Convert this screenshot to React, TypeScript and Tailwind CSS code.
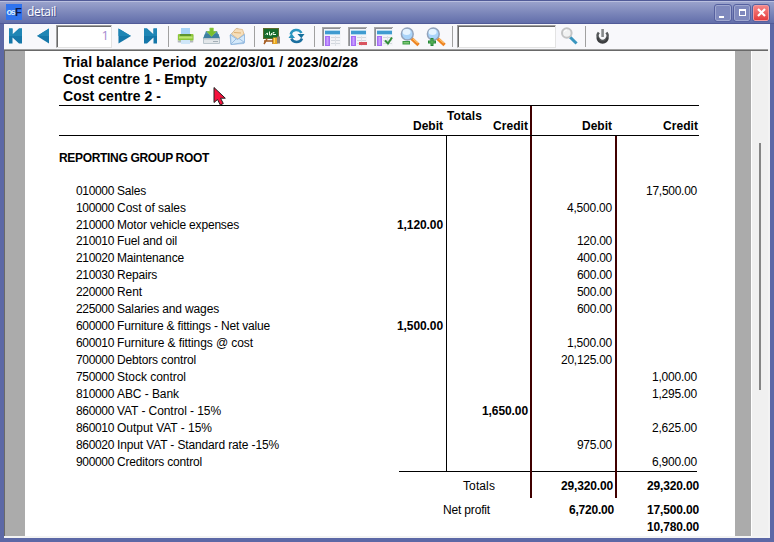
import { useLayoutEffect, useRef, type ReactNode } from "react";

/* Text whose tracking is adjusted so that it occupies a given advance width. */
function Fit({ w, className = "", children }: { w: number; className?: string; children: string }) {
  const ref = useRef<HTMLSpanElement>(null);
  useLayoutEffect(() => {
    const el = ref.current;
    if (!el) return;
    el.style.letterSpacing = "0px";
    const natural = el.getBoundingClientRect().width;
    el.style.letterSpacing = `${(w - natural) / children.length}px`;
  }, [w, children]);
  return (
    <span ref={ref} className={`inline-block whitespace-pre ${className}`}>
      {children}
    </span>
  );
}

function Icon({ children }: { children: ReactNode }) {
  return (
    <svg className="h-[25px] w-[26px] shrink-0" viewBox="0 0 26 25">
      {children}
    </svg>
  );
}

function Sep({ wide = false }: { wide?: boolean }) {
  return (
    <div className={`flex h-full shrink-0 pt-0.5 pb-0.5 ${wide ? "w-[9px] pl-1" : "w-2 pl-[3px]"}`}>
      <div className="w-px bg-[#a0a0a0]" />
    </div>
  );
}

function TableIcon({ children }: { children?: ReactNode }) {
  return (
    <Icon>
      <path d="M3 3h19v1H4v18H3z" fill="#a8a8a8" />
      <path d="M4 4h18v18H4z" fill="#f3f4f7" />
      <path d="M4 4h17v1H5v17H4z" fill="#8d8f96" />
      <rect x="6" y="6" width="15" height="5" fill="#b4dbf0" />
      <rect x="6" y="7" width="15" height="3" fill="#3f9bd0" />
      <rect x="6" y="12" width="5" height="10" fill="#a56cf5" />
      <rect x="7.5" y="13" width="2" height="8" fill="#c99fff" />
      <path d="M12 13.5h9M12 16.5h9M12 19.5h9" stroke="#d3d8de" strokeWidth="1" />
      <path d="M16.5 12v10" stroke="#dde1e6" strokeWidth="1" />
      {children}
    </Icon>
  );
}

function Lens({ children }: { children?: ReactNode }) {
  return (
    <Icon>
      <path d="M14.5 14.5l5.8 5.3" stroke="#ee8322" strokeWidth="3.4" strokeLinecap="square" />
      <path d="M15.8 14.6l5 4.6" stroke="#ffc873" strokeWidth="1.1" />
      <circle cx="10.3" cy="10" r="5.9" fill="#a9d4fa" stroke="#93a3bb" strokeWidth="1.5" />
      <ellipse cx="9.6" cy="8" rx="4" ry="3" fill="#e6f4ff" />
      {children}
    </Icon>
  );
}

function Toolbar() {
  return (
    <div className="flex h-[25px] shrink-0 items-center bg-[#f8f8fb]">
      <div className="-ml-px flex">
        <Icon>
          <path d="M6 4.5h3.5v6L16 4.5h3v15h-3l-6.5-6v6H6z" fill="#1577a9" />
          <path d="M6 4.5h3.5v6L16 4.5h3V12H6z" fill="#1f86b5" />
        </Icon>
      </div>
      <div className="ml-px flex">
        <Icon>
          <path d="M7 12L19 4.5v15z" fill="#1577a9" />
          <path d="M7 12L19 4.5V12z" fill="#1f86b5" />
        </Icon>
      </div>
      <div className="h-[23px] w-14 shrink-0 border border-r-[#e3e3e3] border-b-[#e3e3e3] border-t-[#a0a0a0] border-l-[#a0a0a0] bg-white">
        <div className="flex h-full justify-end border-t border-l border-[#696969] pr-0.5 font-['Open_Sans',sans-serif] text-[13px] leading-[17px] text-[#a58bd0]">
          1
        </div>
      </div>
      <Icon>
        <path d="M19 12L6.5 4.5v15z" fill="#1577a9" />
        <path d="M19 12L6.5 4.5V12z" fill="#1f86b5" />
      </Icon>
      <Icon>
        <path d="M19 4.5h-3.5v6L9 4.5H6v15h3l6.5-6v6H19z" fill="#1577a9" />
        <path d="M19 4.5h-3.5v6L9 4.5H6V12h13z" fill="#1f86b5" />
      </Icon>
      <Sep wide />
      <Icon>
        <rect x="8" y="4" width="9" height="7" fill="#a8d4f6" />
        <rect x="4.500" y="10" width="16" height="9" rx="1.5" fill="#d3d6da" />
        <rect x="5" y="10" width="15.500" height="6.500" rx="1" fill="#8cc63a" />
        <rect x="7" y="10" width="11" height="2" fill="#5f9430" />
        <rect x="6" y="12.500" width="13.500" height="2" fill="#bfe673" />
        <rect x="8" y="16" width="9" height="4" fill="#cfe6f8" />
        <path d="M5 17.500h3M17 17.500h3" stroke="#b0b6bc" />
      </Icon>
      <Icon>
        <path d="M7 7h11l3 8H4z" fill="#4b8fb0" />
        <path d="M6 10h13.500l1.500 5H4z" fill="#3d7f9f" />
        <rect x="4" y="14" width="17" height="6" rx="1" fill="#b9c4cb" />
        <rect x="5" y="15.500" width="15" height="3.500" fill="#e3e7ea" />
        <path d="M14 17.500h5" stroke="#a3aeb6" />
        <path d="M10.800 4h3.600v3.500h3L12.600 12.500 7.800 7.500h3z" fill="#79bf2c" stroke="#95cf4d" strokeWidth=".6" />
      </Icon>
      <Icon>
        <path d="M5 11l7-7 7 5.500v10l-13 1z" fill="#bcd8f0" stroke="#94b9dd" strokeWidth=".7" />
        <path d="M6.500 10l4.500-5.500 6.500 1 1.500 4.500-6 5z" fill="#f6dfbb" stroke="#dfb883" strokeWidth=".8" />
        <path d="M9 8.500l7 .5" stroke="#e0b070" />
        <path d="M5.500 11l7 4.500 7-5V18.500l-13.500 2z" fill="#d4e9fa" stroke="#88b1dc" strokeWidth=".8" />
        <path d="M6 20l5.500-5.500M19.500 18.500l-5.500-4" stroke="#98bbe0" />
      </Icon>
      <Sep />
      <Icon>
        <path d="M8 15l-3 5M14 15v5M5 17h10" stroke="#a45b20" strokeWidth="1.5" />
        <rect x="4.500" y="4.500" width="15" height="10" fill="#176b2c" stroke="#5c6b2c" />
        <path d="M6.500 10.500l2-1.500v2M10.500 7.500v3.500h2v-2M15.500 8.500h-1.500v2h3" stroke="#eafbe7" fill="none" />
        <rect x="14" y="13.500" width="4.500" height="6.500" fill="#e9a823" />
        <rect x="18" y="12.500" width="3" height="7" fill="#8a8177" />
        <path d="M15.500 14v5" stroke="#ffd765" />
      </Icon>
      <Icon>
        <path d="M5.700 10.500A5.800 5.800 0 0 1 16.500 9" stroke="#2a95bf" strokeWidth="2.500" fill="none" />
        <path d="M17 14.500A5.800 5.800 0 0 1 6.300 14.500" stroke="#1b6f9f" strokeWidth="2.500" fill="none" />
        <path d="M12.500 10h7l-3.200 4.300z" fill="#16709c" />
        <path d="M3.500 14h6.500l-3.500-4.500z" fill="#2693bd" />
      </Icon>
      <Sep />
      <TableIcon />
      <TableIcon>
        <rect x="14" y="18" width="8" height="3" fill="#d95560" />
      </TableIcon>
      <TableIcon>
        <path d="M14 16.500l3 3 4-6" stroke="#318e39" strokeWidth="2" fill="none" />
      </TableIcon>
      <Lens>
        <rect x="5.500" y="17" width="7.500" height="3.500" fill="#3a9a45" />
        <rect x="6.500" y="18.200" width="5.500" height="1.200" fill="#8ed47d" />
      </Lens>
      <Lens>
        <path d="M7.500 14h3v2.500H13v3h-2.500V22h-3v-2.500H5v-3h2.500z" fill="#258738" />
        <path d="M9 15v6M6 18h6" stroke="#62b95c" />
      </Lens>
      <Sep />
      <div className="h-[23px] w-[99px] shrink-0 border border-r-[#e3e3e3] border-b-[#e3e3e3] border-t-[#a0a0a0] border-l-[#a0a0a0] bg-white">
        <div className="h-full border-t border-l border-[#696969]" />
      </div>
      <Icon>
        <path d="M15 14l4.500 4.500" stroke="#3995bf" strokeWidth="3" strokeLinecap="square" />
        <circle cx="10.800" cy="9" r="4.800" fill="#f1f2f2" stroke="#c3c4c5" strokeWidth="2" />
        <path d="M8 8a3 3 0 0 1 3-2" stroke="#fff" fill="none" />
      </Icon>
      <Sep />
      <Icon>
        <path d="M8.800 8.500a5 5 0 1 0 7.600 0" stroke="#55585a" strokeWidth="2.600" fill="none" />
        <path d="M7.600 13.500a5 5 0 0 0 10 0" stroke="#3c3e40" strokeWidth="2.400" fill="none" />
        <path d="M12.600 5v8" stroke="#85888a" strokeWidth="2.600" />
      </Icon>
    </div>
  );
}

function TitleBar() {
  return (
    <div className="flex h-6 shrink-0 items-center border-t border-b border-t-[#515b98] border-b-[#515b98] bg-linear-to-b from-[#9ca4cd] to-[#626eaa] px-[5px] shadow-[inset_0_1px_0_#b9bfdf]">
      <div className="ml-px flex h-4 w-4 items-center justify-center bg-[#2f73ee] font-['Liberation_Sans',sans-serif] font-bold leading-none">
        <span className="text-[9px] tracking-[-1px] text-[#d5ecff]">os</span>
        <span className="text-[11px] text-[#0c1a48]">F</span>
      </div>
      <div className="ml-[5px] font-['Open_Sans',sans-serif] text-[12px] leading-4 text-white [text-shadow:1px_1px_0_#4b5591]">
        <Fit w={29}>detail</Fit>
      </div>
      <div className="ml-auto flex gap-[3px] pt-px">
        <div className="flex h-4 w-4 items-end rounded-xs border border-[#a0a8d0] bg-[#7f89bd] pb-0.5 pl-[3px] outline outline-[#5661a0]">
          <div className="h-0.5 w-[5px] bg-white" />
        </div>
        <div className="flex h-4 w-4 items-center justify-center rounded-xs border border-[#a0a8d0] bg-[#7f89bd] outline outline-[#5661a0]">
          <div className="h-[7px] w-[7px] border border-t-2 border-white" />
        </div>
        <div className="flex h-4 w-4 items-center justify-center rounded-xs border border-[#f59a9d] bg-linear-to-b from-[#f58487] to-[#e53a3d] outline outline-[#5661a0]">
          <svg className="h-[9px] w-[9px]" viewBox="0 0 9 9">
            <path d="M1 1l7 7M8 1L1 8" stroke="#fff" strokeWidth="2.2" />
          </svg>
        </div>
      </div>
    </div>
  );
}

type Cell = [string, number];
type Row = { code: string; name: string; w: number; short?: boolean; td?: Cell; tc?: Cell; d?: Cell; c?: Cell };

const rows: Row[] = [
  { code: "010000", name: "Sales", w: 29, c: ["17,500.00", 51] },
  { code: "100000", name: "Cost of sales", w: 69, d: ["4,500.00", 45] },
  { code: "210000", name: "Motor vehicle expenses", w: 122, short: true, td: ["1,120.00", 46] },
  { code: "210010", name: "Fuel and oil", w: 60, d: ["120.00", 35] },
  { code: "210020", name: "Maintenance", w: 67, d: ["400.00", 35] },
  { code: "210030", name: "Repairs", w: 40, d: ["600.00", 35] },
  { code: "220000", name: "Rent", w: 25, d: ["500.00", 35] },
  { code: "225000", name: "Salaries and wages", w: 102, d: ["600.00", 35] },
  { code: "600000", name: "Furniture & fittings - Net value", w: 153, td: ["1,500.00", 46] },
  { code: "600010", name: "Furniture & fittings @ cost", w: 136, d: ["1,500.00", 45] },
  { code: "700000", name: "Debtors control", w: 79, d: ["20,125.00", 51] },
  { code: "750000", name: "Stock control", w: 69, c: ["1,000.00", 45] },
  { code: "810000", name: "ABC - Bank", w: 62, c: ["1,295.00", 45] },
  { code: "860000", name: "VAT - Control - 15%", w: 104, tc: ["1,650.00", 46] },
  { code: "860010", name: "Output VAT - 15%", w: 95, c: ["2,625.00", 45] },
  { code: "860020", name: "Input VAT - Standard rate -15%", w: 162, d: ["975.00", 35] },
  { code: "900000", name: "Creditors control", w: 85, c: ["6,900.00", 45] },
];

function Amount({ cell, bold = false }: { cell?: Cell; bold?: boolean }) {
  return cell ? <Fit w={cell[1]} className={bold ? "font-bold" : ""}>{cell[0]}</Fit> : null;
}

function Report() {
  return (
    <div className="w-[710px] shrink-0 bg-white pt-[3px] pl-[34px] font-['Liberation_Sans',Arial,sans-serif] text-[12px] leading-[17px] text-black">
      <div className="flex flex-col items-start pl-1 text-[14px] font-bold">
        <Fit w={295}>{"Trial balance Period  2022/03/01 / 2023/02/28"}</Fit>
        <Fit w={144}>Cost centre 1 - Empty</Fit>
        <Fit w={98}>Cost centre 2 -</Fit>
      </div>

      <div className="flex h-[31px] w-[640px] border-y border-black font-bold">
        <div className="flex w-[388px] items-end justify-end pr-1">
          <Fit w={30}>Debit</Fit>
        </div>
        <div className="flex w-[85px] flex-col border-r-2 border-[#400000] pt-0.5">
          <div className="h-[11px]">
            <Fit w={35}>Totals</Fit>
          </div>
          <div className="-mt-px self-end pr-0.5">
            <Fit w={35}>Credit</Fit>
          </div>
        </div>
        <div className="flex w-[85px] items-end justify-end pr-[5px]">
          <Fit w={30}>Debit</Fit>
        </div>
        <div className="flex w-[82px] items-end justify-end pr-px">
          <Fit w={35}>Credit</Fit>
        </div>
      </div>

      <div className="grid grid-cols-[388px_85px_85px_82px]">
        <div className="h-[47px] border-r border-black pt-[14px] font-bold">
          <Fit w={150}>REPORTING GROUP ROOT</Fit>
        </div>
        <div className="border-r-2 border-[#400000]" />
        <div className="border-r-2 border-[#400000]" />
        <div />
      </div>

      {rows.map((r) => (
        <div key={r.code} className={`grid grid-cols-[388px_85px_85px_82px] ${r.short ? "h-4" : "h-[17px]"}`}>
          <div className="flex border-r border-black pr-[3px] pl-[17px]">
            <Fit w={41}>{r.code + " "}</Fit>
            <Fit w={r.w}>{r.name}</Fit>
            <div className="ml-auto">
              <Amount cell={r.td} bold />
            </div>
          </div>
          <div className="flex justify-end border-r-2 border-[#400000] pr-0.5">
            <Amount cell={r.tc} bold />
          </div>
          <div className="flex justify-end border-r-2 border-[#400000] pr-[3px]">
            <Amount cell={r.d} />
          </div>
          <div className="flex justify-end pr-0.5">
            <Amount cell={r.c} />
          </div>
        </div>
      ))}

      <div className="flex h-[27px]">
        <div className="w-[340px]" />
        <div className="w-[133px] border-r-2 border-[#400000]">
          <div className="h-px bg-black" />
          <div className="pt-[6px] pl-[64px]">
            <Fit w={32}>Totals</Fit>
          </div>
        </div>
        <div className="w-[85px] border-r-2 border-[#400000]">
          <div className="h-px bg-black" />
          <div className="flex justify-end pt-[6px] pr-0.5 font-bold">
            <Fit w={52}>29,320.00</Fit>
          </div>
        </div>
        <div className="w-[82px]">
          <div className="mr-0.5 h-px bg-black" />
          <div className="flex justify-end pt-[6px] font-bold">
            <Fit w={52}>29,320.00</Fit>
          </div>
        </div>
      </div>
      <div className="flex w-[640px] pt-1">
        <div className="w-[384px]" />
        <Fit w={47}>Net profit</Fit>
        <div className="ml-auto pr-[33px] font-bold">
          <Fit w={45}>6,720.00</Fit>
        </div>
        <div className="flex flex-col font-bold">
          <Fit w={52}>17,500.00</Fit>
          <Fit w={52}>10,780.00</Fit>
        </div>
      </div>
    </div>
  );
}

export default function App() {
  return (
    <div className="relative flex h-[542px] w-[774px] flex-col overflow-hidden bg-[#626eaa]">
      <TitleBar />
      <div className="flex h-[518px] flex-col border-x-4 border-b-4 border-[#5c68a6] shadow-[inset_1px_0_0_#46508c]">
        <Toolbar />
        <div className="flex h-[489px] flex-col border-r-2 border-b-2 border-[#f3f3f3]">
          <div className="h-px shrink-0 bg-[#a0a0a0]" />
          <div className="h-px shrink-0 bg-[#696969]" />
          <div className="flex h-[485px] overflow-hidden border-l border-[#696969]">
            <div className="w-5 shrink-0 bg-[#ababab]" />
            <Report />
            <div className="w-4 shrink-0 bg-[#ababab]" />
            <div className="flex flex-1 justify-center border-l border-white bg-[#f0f0f0] pt-[92px]">
              <div className="h-[247px] w-0.5 bg-[#858585]" />
            </div>
          </div>
        </div>
      </div>
      <svg className="absolute top-[86px] left-[212px] h-5 w-4" viewBox="0 0 16 20">
        <path d="M2 1.5v15l3.5-3 2.8 5.5 3-1.5-2.8-5.3h4.800z" fill="#f5123d" stroke="#222" strokeWidth="1" />
      </svg>
    </div>
  );
}
